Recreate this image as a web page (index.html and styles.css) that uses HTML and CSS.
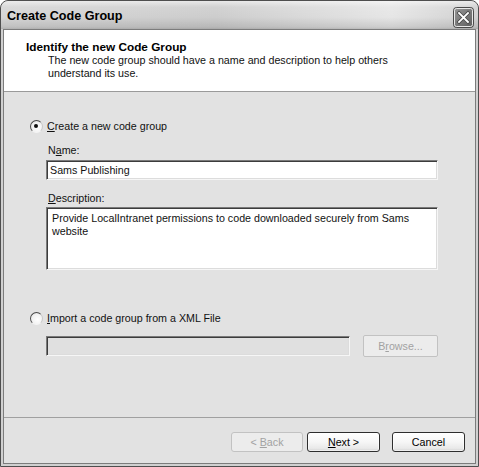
FILE: index.html
```html
<!DOCTYPE html>
<html>
<head>
<meta charset="utf-8">
<link rel="stylesheet" href="styles.css">
</head>
<body>
<div class="window">
  <div class="titlebar">
    <span class="title">Create Code Group</span>
    <span class="close">
      <svg width="21" height="21" viewBox="0 0 21 21">
        <defs>
          <linearGradient id="cg" x1="0" y1="0" x2="1" y2="1">
            <stop offset="0" stop-color="#9a9a9a"/>
            <stop offset="1" stop-color="#5c5c5c"/>
          </linearGradient>
        </defs>
        <rect x="0.5" y="0.5" width="20" height="20" rx="3" fill="url(#cg)" stroke="#4a4a4a"/>
        <rect x="1.5" y="1.5" width="18" height="18" rx="2" fill="none" stroke="#e8e8e8" stroke-width="1"/>
        <path d="M6 6 L15 15 M15 6 L6 15" stroke="#4a4a4a" stroke-width="3.4" stroke-linecap="square"/>
        <path d="M6 6 L15 15 M15 6 L6 15" stroke="#ffffff" stroke-width="1.8" stroke-linecap="square"/>
      </svg>
    </span>
  </div>
  <div class="client">
    <div class="header">
      <div class="h-title">Identify the new Code Group</div>
      <div class="h-desc">The new code group should have a name and description to help others<br>understand its use.</div>
    </div>
    <div class="body">
      <div class="radio-row">
        <span class="radio checked"></span>
        <span><u>C</u>reate a new code group</span>
      </div>
      <div class="group">
        <div class="label first">N<u>a</u>me:</div>
        <div class="textbox">Sams Publishing</div>
        <div class="label"><u>D</u>escription:</div>
        <div class="textarea">Provide LocalIntranet permissions to code downloaded securely from Sams<br>website</div>
      </div>
      <div class="radio-row import">
        <span class="radio"></span>
        <span><u>I</u>mport a code group from a XML File</span>
      </div>
      <div class="file-row">
        <div class="textbox disabled file"></div>
        <div class="btn disabled browse"><span>B<u>r</u>owse...</span></div>
      </div>
    </div>
    <div class="footer">
      <div class="btn disabled back"><span>&lt; <u>B</u>ack</span></div>
      <div class="btn next"><span><u>N</u>ext &gt;</span></div>
      <div class="btn cancel"><span>Cancel</span></div>
    </div>
  </div>
</div>
</body>
</html>
```

FILE: styles.css
```css
html, body {
  margin: 0;
  padding: 0;
  background: #ffffff;
}

body {
  font-family: "Liberation Sans", Arial, sans-serif;
  font-size: 10.7px;
  line-height: 13px;
  color: #111;
}

.window {
  box-sizing: border-box;
  width: 479px;
  height: 467px;
  border: 1px solid #4e4e4e;
  border-radius: 8px 8px 0 0;
  background: #d0d0d0;
  padding: 0 2px 2px;
  display: flex;
  flex-direction: column;
  overflow: hidden;
}

.titlebar {
  height: 28px;
  margin: 0 -2px;
  display: flex;
  justify-content: space-between;
  align-items: flex-start;
  border-radius: 7px 7px 0 0;
  background:
    linear-gradient(to bottom, rgba(255,255,255,0.55) 0px, rgba(255,255,255,0.1) 6px, rgba(255,255,255,0) 16px, rgba(0,0,0,0.10) 26px, rgba(0,0,0,0.18) 28px),
    linear-gradient(to right, #d6d6d6 0%, #cdcdcd 45%, #e6e6e6 82%, #d0d0d0 100%);
}

.title {
  font-weight: bold;
  font-size: 12.6px;
  line-height: 15px;
  padding: 8px 0 0 6px;
  color: #000;
}

.close {
  display: block;
  width: 21px;
  height: 21px;
  margin: 6px 4px 0 0;
}

.close svg {
  display: block;
}

.client {
  flex: 1;
  display: flex;
  flex-direction: column;
  border: 1px solid #7c7c7c;
  background: #e2e2e2;
}

.header {
  height: 62px;
  box-sizing: border-box;
  padding: 10px 0 0 22px;
  background: #ffffff;
  border-bottom: 1px solid #9a9a9a;
}

.h-title {
  font-weight: bold;
  font-size: 11.8px;
  line-height: 14px;
  color: #000;
}

.h-desc {
  margin-left: 22px;
}

.body {
  flex: 1;
  padding-top: 28px;
}

.radio-row {
  display: flex;
  align-items: center;
  gap: 4px;
  margin-left: 26px;
  height: 13px;
}

.radio {
  box-sizing: border-box;
  width: 13px;
  height: 13px;
  border-radius: 50%;
  border: 1px solid;
  border-color: #4a4a4a #c8c8c8 #f4f4f4 #4a4a4a;
  background: radial-gradient(circle at 60% 60%, #ffffff 0%, #f2f2f2 55%, #d8d8d8 100%);
  position: relative;
}

.radio.checked::after {
  content: "";
  position: absolute;
  left: 3px;
  top: 3px;
  width: 4px;
  height: 4px;
  border-radius: 50%;
  background: #111;
}

.group {
  margin-left: 42px;
  width: 392px;
}

.label {
  padding-left: 2px;
  margin-top: 12px;
}

.label.first {
  margin-top: 11px;
}

.textbox,
.textarea {
  box-sizing: border-box;
  background: #ffffff;
  border: 1px solid;
  border-color: #7a7a7a #f6f6f6 #f6f6f6 #7a7a7a;
  box-shadow: inset 1px 1px 0 #3c3c3c, inset -1px -1px 0 #dcdcdc;
}

.textbox {
  height: 20px;
  margin-top: 3px;
  padding: 3px 0 0 3px;
}

.textarea {
  height: 63px;
  margin-top: 2px;
  padding: 4px 0 0 5px;
}

.radio-row.import {
  margin-top: 42px;
}

.file-row {
  display: flex;
  align-items: flex-start;
  gap: 13px;
  margin: 10px 0 0 42px;
}

.textbox.file {
  width: 304px;
  margin-top: 1px;
}

.textbox.disabled {
  background: #e0e0e0;
}

.btn {
  box-sizing: border-box;
  height: 20px;
  display: flex;
  align-items: center;
  justify-content: center;
  border: 1px solid #2e2e2e;
  border-radius: 3px;
  background: linear-gradient(to bottom, #ffffff 0%, #f6f6f6 50%, #e9e9e9 85%, #d2d2d2 100%);
  box-shadow: inset 0 0 0 1px rgba(255,255,255,0.6);
  color: #000;
}

.btn.disabled {
  border-color: #c2c2c2;
  background: #ececec;
  color: #a2a2a2;
  box-shadow: none;
}

.browse {
  width: 75px;
  height: 22px;
  border-radius: 2px;
  box-shadow: inset 1px 1px 0 #f8f8f8, inset -1px -1px 0 #cfcfcf;
}

.footer {
  height: 46px;
  box-sizing: border-box;
  border-top: 1px solid #a0a0a0;
  display: flex;
  justify-content: flex-end;
  align-items: flex-start;
  padding: 14px 10px 0 0;
}

.back {
  width: 72px;
}

.next {
  width: 73px;
  margin-left: 4px;
}

.cancel {
  width: 73px;
  margin-left: 12px;
}
```
